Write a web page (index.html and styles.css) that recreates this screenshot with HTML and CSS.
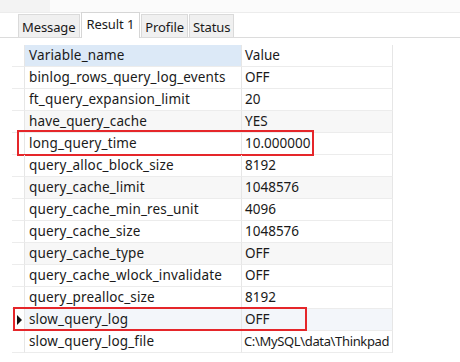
FILE: index.html
```html
<!DOCTYPE html>
<html>
<head>
<meta charset="utf-8">
<link rel="stylesheet" href="styles.css">
</head>
<body>
<div class="top"><div class="top-left"></div></div>
<div class="tabs">
  <div class="tab">Message</div>
  <div class="tab active">Result 1</div>
  <div class="tab">Profile</div>
  <div class="tab">Status</div>
</div>
<div class="grid">
  <div class="row head"><div class="gut"></div><div class="c1">Variable_name</div><div class="c2">Value</div></div>
  <div class="row"><div class="gut"></div><div class="c1">binlog_rows_query_log_events</div><div class="c2">OFF</div></div>
  <div class="row"><div class="gut"></div><div class="c1">ft_query_expansion_limit</div><div class="c2">20</div></div>
  <div class="row alt"><div class="gut"></div><div class="c1">have_query_cache</div><div class="c2">YES</div></div>
  <div class="row"><div class="gut"></div><div class="c1">long_query_time</div><div class="c2">10.000000</div><div class="mark mark1"></div></div>
  <div class="row"><div class="gut"></div><div class="c1">query_alloc_block_size</div><div class="c2">8192</div></div>
  <div class="row alt"><div class="gut"></div><div class="c1">query_cache_limit</div><div class="c2">1048576</div></div>
  <div class="row"><div class="gut"></div><div class="c1">query_cache_min_res_unit</div><div class="c2">4096</div></div>
  <div class="row"><div class="gut"></div><div class="c1">query_cache_size</div><div class="c2">1048576</div></div>
  <div class="row alt"><div class="gut"></div><div class="c1">query_cache_type</div><div class="c2">OFF</div></div>
  <div class="row"><div class="gut"></div><div class="c1">query_cache_wlock_invalidate</div><div class="c2">OFF</div></div>
  <div class="row"><div class="gut"></div><div class="c1">query_prealloc_size</div><div class="c2">8192</div></div>
  <div class="row sel"><div class="gut"><span class="tri"></span></div><div class="c1">slow_query_log</div><div class="c2">OFF</div><div class="mark mark2"></div></div>
  <div class="row"><div class="gut"></div><div class="c1">slow_query_log_file</div><div class="c2 file">C:\MySQL\data\Thinkpad</div></div>
</div>
</body>
</html>
```
FILE: styles.css
```css
* { box-sizing: border-box; }
html, body { margin: 0; padding: 0; background: #ffffff; }
body {
  width: 460px; height: 362px; overflow: hidden;
  font-family: "Noto Sans", "Open Sans", sans-serif;
  font-size: 13.5px; letter-spacing: 0.15px; color: #1a1a1a;
}
.top { height: 13px; background: #fbfbfb; border-bottom: 1px solid #ececec; }
.top-left { width: 50px; height: 12px; background: #f3f3f3; }
.tabs {
  display: flex; align-items: flex-end; height: 25px;
  padding-left: 18px; border-bottom: 1px solid #dcdcdc;
}
.tab {
  height: 23px; line-height: 24px; padding: 0 3px;
  font-size: 13px; letter-spacing: -0.1px;
  background: #f0f0f0; border: 1px solid #dadada; border-bottom: none;
  margin-right: 1px; color: #1a1a1a;
}
.tab.active {
  height: 26px; line-height: 23px; background: #ffffff; margin-bottom: -1px;
  padding: 0 5px; border-color: #d6d6d6;
}
.grid { margin-top: 7px; padding-left: 12px; }
.row { position: relative; display: flex; height: 22px; line-height: 21px; }
.gut { width: 13px; border-right: 1px solid #e6e6e6; border-bottom: 1px solid #ececec; position: relative; }
.c1 { width: 217px; padding-left: 4px; border-right: 1px solid #e6e6e6; border-bottom: 1px solid #ececec; white-space: nowrap; overflow: hidden; }
.c2 { width: 151px; padding-left: 3px; letter-spacing: 0; border-right: 1px solid #e6e6e6; border-bottom: 1px solid #ececec; white-space: nowrap; overflow: hidden; }
.c2.file { font-size: 13px; letter-spacing: -0.35px; padding-left: 2px; }
.head .c1 { background: #dce9f7; }
.head .c2 { background: #ffffff; }
.alt .c1, .alt .c2 { background: #f7f7f7; }
.sel .c1, .sel .c2 { background: #f3f6fa; }
.tri {
  position: absolute; left: 5px; top: 6px; width: 0; height: 0;
  border-top: 5px solid transparent; border-bottom: 5px solid transparent;
  border-left: 5px solid #111;
}
.mark { position: absolute; border: 2px solid #e5262a; pointer-events: none; }
.mark1 { left: 5px; top: -3px; width: 297px; height: 26px; }
.mark2 { left: 1px; top: -2px; width: 294px; height: 24px; }
```
